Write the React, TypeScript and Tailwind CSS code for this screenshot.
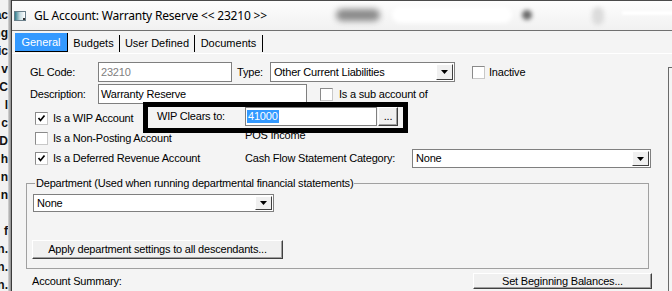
import React from "react";

const leftBits = ["ac", "ng", "ic", "v", "C", "l", "c", "D", "h", "n", "n", "", "f", "n.", "n.", "n."];

function LeftStrip() {
  return (
    <div className="w-[12px] h-full flex shrink-0">
      <div className="w-[8px] h-full bg-[#f2f2f2] overflow-hidden pt-[6px] font-bold text-[12px] text-[#111]">
        {leftBits.map((b, i) => (
          <div key={i} className="flex justify-end h-[18px] leading-[18px]">
            <span className="shrink-0 whitespace-nowrap">{b}</span>
          </div>
        ))}
      </div>
      <div className="w-[3px] h-full bg-gradient-to-r from-[#d8d8d8] to-[#8c8c8c]" />
      <div className="w-[1px] h-full bg-[#3a3a3a]" />
    </div>
  );
}

function Check({ checked }: { checked?: boolean }) {
  return (
    <span className="w-[13px] h-[13px] shrink-0 bg-white border border-[#8a8a8a] border-b-[#c8c8c8] border-r-[#c8c8c8] flex items-center justify-center">
      {checked && (
        <svg width="9" height="9" viewBox="0 0 9 9">
          <path d="M1.5 4 L3.5 6.5 L7.5 1.5" stroke="#000" strokeWidth="1.7" fill="none" />
        </svg>
      )}
    </span>
  );
}

function Arrow() {
  return (
    <span className="w-[17px] h-full shrink-0 bg-[#f0f0f0] border border-white border-r-[#404040] border-b-[#404040] flex items-center justify-center">
      <svg width="7" height="4" viewBox="0 0 7 4">
        <path d="M0 0 H7 L3.5 4 Z" fill="#000" />
      </svg>
    </span>
  );
}

function Combo({ value, className }: { value: string; className: string }) {
  return (
    <div className={`${className} bg-white border border-[#7f7f7f] flex items-stretch p-[1px]`}>
      <span className="flex-1 pl-[2px] flex items-center">{value}</span>
      <Arrow />
    </div>
  );
}

function Btn({ label, className }: { label: string; className: string }) {
  return (
    <div
      className={`${className} bg-[#f0f0f0] border border-white border-r-[#404040] border-b-[#404040] flex items-center justify-center shadow-[inset_-1px_-1px_0_#a0a0a0]`}
    >
      {label}
    </div>
  );
}

function TitleBar() {
  return (
    <div className="h-[31px] shrink-0 border-t border-b border-t-[#4a4a4a] border-b-[#707070] bg-gradient-to-b from-[#fdfdfd] to-[#f1f1f1] flex items-center relative overflow-hidden">
      <span className="ml-[2px] w-[12px] h-[10px] border border-[#6a7f8a] bg-gradient-to-r from-[#2e7f8f] via-[#c7dbe0] to-white flex items-end justify-end">
        <span className="w-[2px] h-[2px] bg-[#333]" />
      </span>
      <span className="ml-[8px] font-['Noto_Sans',sans-serif] text-[12px] tracking-[-0.2px] text-black whitespace-nowrap">
        GL Account: Warranty Reserve &lt;&lt; 23210 &gt;&gt;
      </span>
      <span className="absolute left-[324px] top-[8px] w-[44px] h-[12px] rounded-full bg-[#8a8a8a] blur-[3px]" />
      <span className="absolute left-[380px] top-[6px] w-[120px] h-[16px] rounded-full bg-white blur-[2px]" />
      <span className="absolute left-[510px] top-[9px] w-[10px] h-[10px] rounded-full bg-[#6a6a6a] blur-[2px]" />
      <span className="absolute left-[580px] top-[6px] w-[12px] h-[18px] rounded-full bg-[#dcdcdc] blur-[2px]" />
      <span className="absolute left-[610px] top-[10px] w-[60px] h-[4px] bg-white blur-[1px]" />
    </div>
  );
}

function Tabs() {
  const tabs = [
    { t: "General", w: "w-[53px]" },
    { t: "Budgets", w: "w-[52px]" },
    { t: "User Defined", w: "w-[75px]" },
    { t: "Documents", w: "w-[68px]" },
  ];
  return (
    <div className="h-[23px] shrink-0 border-b border-white flex items-end pl-[3px] pb-[1px]">
      {tabs.map((tab, i) =>
        i === 0 ? (
          <div
            key={tab.t}
            className={`${tab.w} h-[19px] bg-[#3399ff] text-white border-b border-r border-black flex items-center justify-center`}
          >
            {tab.t}
          </div>
        ) : (
          <div key={tab.t} className={`${tab.w} h-[17px] border-r border-black flex items-center justify-center`}>
            {tab.t}
          </div>
        )
      )}
    </div>
  );
}

export default function App() {
  return (
    <div className="w-[672px] h-[291px] overflow-hidden flex bg-[#f4f4f4] font-['Liberation_Sans',Arial,sans-serif] text-[11px] leading-[13px] text-black">
      <LeftStrip />
      <div className="flex-1 flex flex-col min-w-0">
        <TitleBar />
        <Tabs />
        <div className="flex-1 flex tracking-[-0.2px]">
          <div className="w-[656px] shrink-0 relative flex flex-col">
            {/* row 1 */}
            <div className="mt-[8px] h-[20px] flex items-center pl-[18px]">
              <span className="w-[68px]">GL Code:</span>
              <div className="w-[134px] h-full bg-white border border-[#7f7f7f] flex items-center pl-[2px] text-[#808080]">
                23210
              </div>
              <span className="ml-[5px] w-[33px]">Type:</span>
              <Combo value="Other Current Liabilities" className="w-[185px] h-full" />
              <span className="ml-[17px]">
                <Check />
              </span>
              <span className="ml-[4px]">Inactive</span>
            </div>
            {/* row 2 */}
            <div className="mt-[2px] h-[20px] flex items-center pl-[18px]">
              <span className="w-[68px]">Description:</span>
              <div className="w-[209px] h-full bg-white border border-[#7f7f7f] flex items-center pl-[2px]">
                Warranty Reserve
              </div>
              <span className="ml-[13px]">
                <Check />
              </span>
              <span className="ml-[6px]">Is a sub account of</span>
            </div>
            {/* checkboxes + right column */}
            <div className="mt-[8px] flex">
              <div className="w-[210px] ml-[23px] flex flex-col gap-[7px]">
                <div className="h-[13px] flex items-center">
                  <Check checked />
                  <span className="ml-[5px]">Is a WIP Account</span>
                </div>
                <div className="h-[13px] flex items-center">
                  <Check />
                  <span className="ml-[5px]">Is a Non-Posting Account</span>
                </div>
                <div className="h-[13px] flex items-center">
                  <Check checked />
                  <span className="ml-[5px]">Is a Deferred Revenue Account</span>
                </div>
              </div>
              <div className="flex flex-col">
                <span className="mt-[17px] h-[13px]">POS Income</span>
                <div className="mt-[7px] h-[19px] flex items-center">
                  <span className="w-[167px]">Cash Flow Statement Category:</span>
                  <Combo value="None" className="w-[239px] h-full" />
                </div>
              </div>
            </div>
            {/* department group */}
            <div className="mt-[15px] ml-[14px] w-[623px] h-[86px] border border-[#a0a0a0] relative flex flex-col pl-[6px] pt-[10px]">
              <span className="absolute -top-[7px] left-[8px] bg-[#f4f4f4] px-[1px] whitespace-nowrap">
                Department (Used when running departmental financial statements)
              </span>
              <Combo value="None" className="w-[241px] h-[18px]" />
              <Btn label="Apply department settings to all descendants..." className="mt-[28px] -ml-[1px] w-[251px] h-[19px]" />
            </div>
            {/* summary row */}
            <div className="mt-[4px] h-[16px] flex items-center justify-between pl-[20px] pr-[16px]">
              <span>Account Summary:</span>
              <Btn label="Set Beginning Balances..." className="w-[179px] h-full" />
            </div>

            {/* highlighted WIP clears to box */}
            <div className="absolute left-[131px] top-[48px] w-[265px] h-[31px] border-[5px] border-black bg-[#f4f4f4] flex items-start pl-[9px]">
              <span className="w-[88px] h-[19px] flex items-center">WIP Clears to:</span>
              <div className="w-[132px] h-[19px] bg-white border border-[#7f7f7f] flex items-center pl-[1px]">
                <span className="bg-[#3399ff] text-white px-[1px]">41000</span>
              </div>
              <Btn label="..." className="ml-[1px] w-[20px] h-[19px]" />
            </div>
          </div>
          <div className="flex-1 mt-[13px] border-l border-t border-[#6a6a6a]" />
        </div>
      </div>
    </div>
  );
}
